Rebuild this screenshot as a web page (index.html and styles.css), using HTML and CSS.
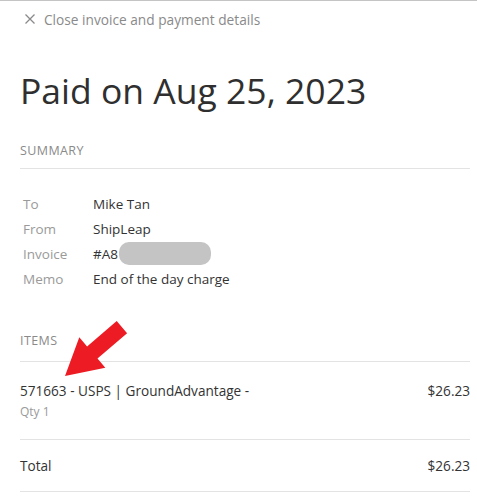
FILE: index.html
```html
<!DOCTYPE html>
<html>
<head>
<meta charset="utf-8">
<link rel="stylesheet" href="styles.css">
</head>
<body>
<div class="panel">
  <div class="close">
    <svg class="close-icon" width="10" height="10" viewBox="0 0 10 10"><path d="M0.5 0.5 L9.5 9.5 M9.5 0.5 L0.5 9.5" stroke="#8a8a8a" stroke-width="1.3" fill="none"/></svg>
    <span>Close invoice and payment details</span>
  </div>
  <h1 class="title">Paid on Aug 25, 2023</h1>

  <div class="section-label">SUMMARY</div>
  <div class="summary">
    <div class="label">To</div><div class="value">Mike Tan</div>
    <div class="label">From</div><div class="value">ShipLeap</div>
    <div class="label">Invoice</div><div class="value">#A8<span class="redact"></span></div>
    <div class="label">Memo</div><div class="value">End of the day charge</div>
  </div>

  <div class="section-label items-label">ITEMS</div>
  <div class="item">
    <div class="item-main">
      <div class="item-name">571663 - USPS | GroundAdvantage -</div>
      <div class="item-qty">Qty 1</div>
    </div>
    <div class="item-price">$26.23</div>
  </div>
  <div class="total">
    <div>Total</div>
    <div>$26.23</div>
  </div>
</div>
<svg class="arrow" width="477" height="496" viewBox="0 0 477 496">
  <polygon fill="#ed1c24" points="65,376 79.3,337.3 87.1,346.4 116.7,321 127.1,333.2 97.5,358.6 105.3,367.7"/>
</svg>
</body>
</html>
```
FILE: styles.css
```css
html, body {
  margin: 0;
  padding: 0;
  background: #fff;
}
body {
  border-top: 1px solid #c4c4c4;
  font-family: "Open Sans", "Noto Sans", sans-serif;
  color: #333;
  position: relative;
}
.panel {
  padding: 0 7px 0 20px;
}
.close {
  display: flex;
  align-items: center;
  height: 36px;
  padding-left: 5px;
  font-size: 13.7px;
  color: #8a8a8a;
}
.close-icon {
  margin-right: 9px;
}
.title {
  margin: 0;
  padding-top: 29px;
  font-size: 35.5px;
  font-weight: 400;
  line-height: 48px;
  color: #2f2f2f;
}
.section-label {
  margin-top: 29px;
  font-size: 12.5px;
  letter-spacing: 0.4px;
  color: #8a8a8a;
  line-height: 16px;
  padding-bottom: 9px;
  border-bottom: 1px solid #e3e3e3;
}
.summary {
  display: grid;
  grid-template-columns: 70px 1fr;
  grid-auto-rows: 25px;
  padding: 22px 0 0 3px;
  font-size: 13.5px;
  align-items: center;
}
.label {
  color: #9a9a9a;
}
.value {
  color: #333;
  display: flex;
  align-items: center;
}
.redact {
  display: inline-block;
  width: 92px;
  height: 23px;
  border-radius: 10px;
  background: #c4c4c4;
  margin-left: 1px;
}
.items-label {
  margin-top: 42px;
  padding-bottom: 12px;
}
.item {
  display: flex;
  justify-content: space-between;
  padding: 18px 0 17px;
  border-bottom: 1px solid #e3e3e3;
  font-size: 13.6px;
}
.item-name {
  line-height: 22px;
}
.item-price {
  line-height: 22px;
}
.item-qty {
  font-size: 12px;
  color: #9a9a9a;
  line-height: 20px;
}
.total {
  display: flex;
  justify-content: space-between;
  height: 51px;
  align-items: center;
  font-size: 13.6px;
  border-bottom: 1px solid #e3e3e3;
}
.arrow {
  position: absolute;
  left: 0;
  top: -1px;
  pointer-events: none;
}
```
